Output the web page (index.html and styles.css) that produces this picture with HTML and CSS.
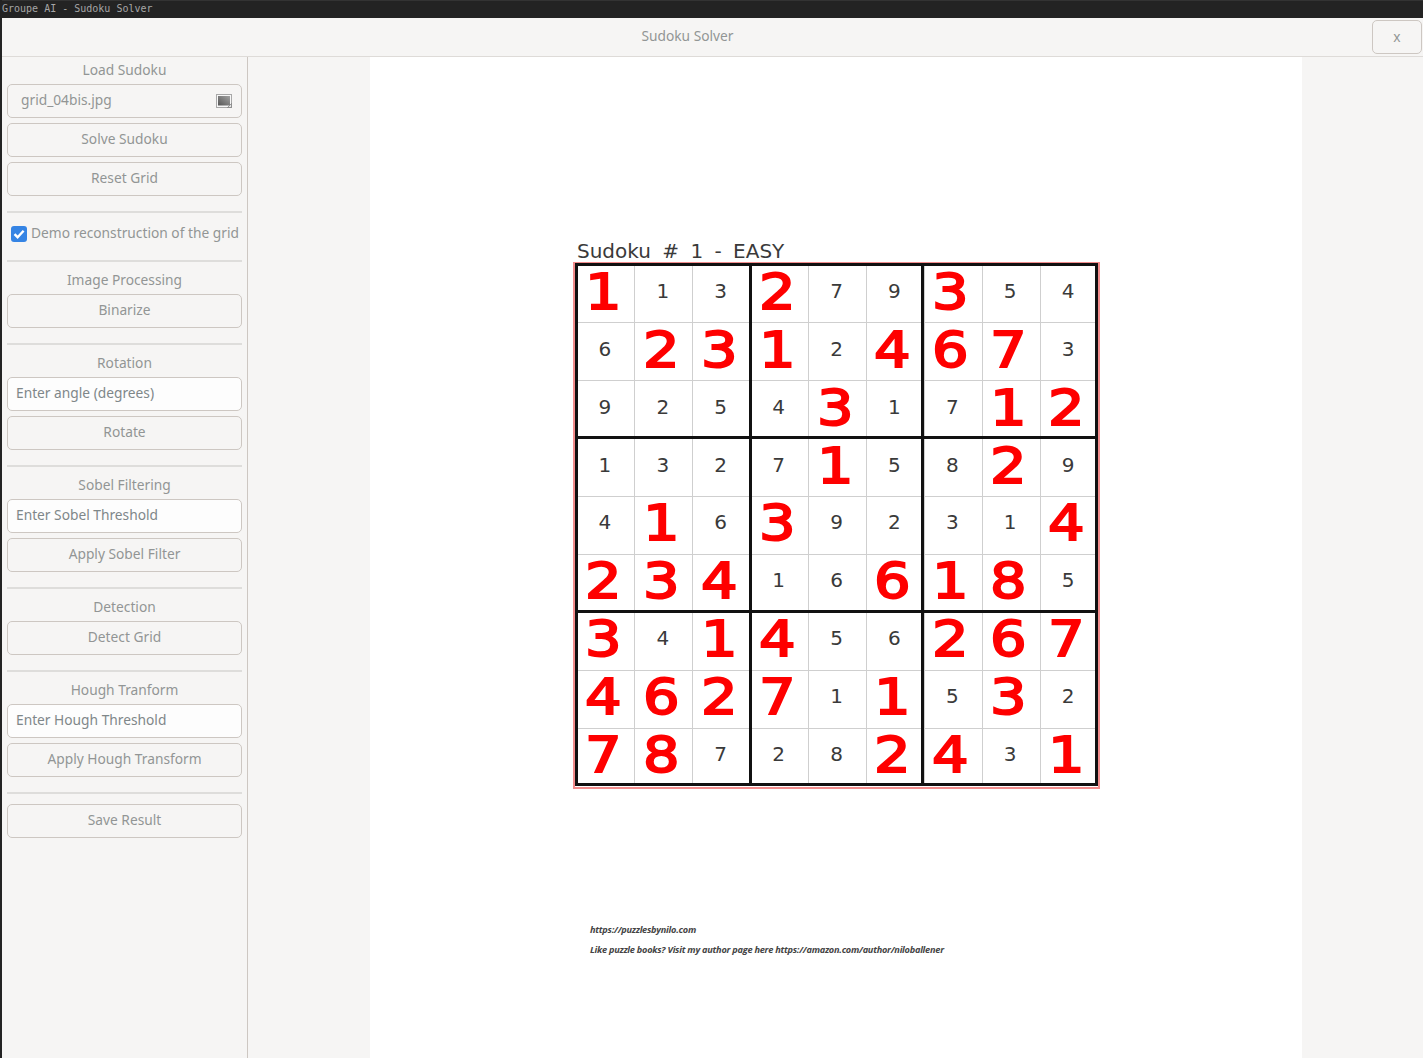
FILE: index.html
```html
<!DOCTYPE html>
<html lang="en">
<head>
    <meta charset="UTF-8">
    <title>Sudoku Solver</title>
    <link rel="stylesheet" href="styles.css">
</head>
<body>

    <!-- Window manager title strip -->
    <div class="wm-title">Groupe AI - Sudoku Solver</div>

    <div class="window">
        <header class="headerbar">
            <span class="headerbar-title">Sudoku Solver</span>
            <button class="close-btn">x</button>
        </header>

        <div class="content">
            <!-- Tool column on the left -->
            <aside class="sidebar">
                <div class="label">Load Sudoku</div>
                <div class="btn file-btn">
                    <span>grid_04bis.jpg</span>
                    <svg class="file-icon" width="16" height="14" viewBox="0 0 16 14">
                        <defs>
                            <linearGradient id="pic" x1="1" y1="0" x2="0" y2="1">
                                <stop offset="0" stop-color="#a2a2a2"/>
                                <stop offset="1" stop-color="#565656"/>
                            </linearGradient>
                        </defs>
                        <rect x="0.5" y="0.5" width="15" height="13" fill="#f6f6f6" stroke="#a8a8a8"/>
                        <rect x="2" y="2" width="12" height="9.5" fill="url(#pic)"/>
                        <path d="M11.5 13.5 L15.5 9.5 V13.5 Z" fill="#e4e4e4" stroke="#777" stroke-width="0.7"/>
                    </svg>
                </div>
                <div class="btn">Solve Sudoku</div>
                <div class="btn">Reset Grid</div>
                <div class="sep"></div>

                <label class="check-row">
                    <span class="check">
                        <svg width="16" height="16" viewBox="0 0 16 16">
                            <path d="M3.5 8.2 L6.6 11.2 L12.6 4.8" fill="none" stroke="#fff" stroke-width="2.4"/>
                        </svg>
                    </span>
                    Demo reconstruction of the grid
                </label>
                <div class="sep sep-check"></div>

                <div class="label">Image Processing</div>
                <div class="btn">Binarize</div>
                <div class="sep"></div>

                <div class="label">Rotation</div>
                <div class="entry">Enter angle (degrees)</div>
                <div class="btn">Rotate</div>
                <div class="sep"></div>

                <div class="label">Sobel Filtering</div>
                <div class="entry">Enter Sobel Threshold</div>
                <div class="btn">Apply Sobel Filter</div>
                <div class="sep"></div>

                <div class="label">Detection</div>
                <div class="btn">Detect Grid</div>
                <div class="sep"></div>

                <div class="label">Hough Tranform</div>
                <div class="entry">Enter Hough Threshold</div>
                <div class="btn">Apply Hough Transform</div>
                <div class="sep"></div>

                <div class="btn">Save Result</div>
            </aside>

            <!-- Loaded puzzle page -->
            <main class="viewer">
                <div class="page">
                    <div class="puzzle-title">Sudoku # 1 - EASY</div>
                    <div class="board-outline">
                        <div class="board">
                            <div class="cell big">1</div><div class="cell">1</div><div class="cell">3</div><div class="cell big">2</div><div class="cell">7</div><div class="cell">9</div><div class="cell big">3</div><div class="cell">5</div><div class="cell">4</div>
                            <div class="cell">6</div><div class="cell big">2</div><div class="cell big">3</div><div class="cell big">1</div><div class="cell">2</div><div class="cell big">4</div><div class="cell big">6</div><div class="cell big">7</div><div class="cell">3</div>
                            <div class="cell">9</div><div class="cell">2</div><div class="cell">5</div><div class="cell">4</div><div class="cell big">3</div><div class="cell">1</div><div class="cell">7</div><div class="cell big">1</div><div class="cell big">2</div>
                            <div class="cell">1</div><div class="cell">3</div><div class="cell">2</div><div class="cell">7</div><div class="cell big">1</div><div class="cell">5</div><div class="cell">8</div><div class="cell big">2</div><div class="cell">9</div>
                            <div class="cell">4</div><div class="cell big">1</div><div class="cell">6</div><div class="cell big">3</div><div class="cell">9</div><div class="cell">2</div><div class="cell">3</div><div class="cell">1</div><div class="cell big">4</div>
                            <div class="cell big">2</div><div class="cell big">3</div><div class="cell big">4</div><div class="cell">1</div><div class="cell">6</div><div class="cell big">6</div><div class="cell big">1</div><div class="cell big">8</div><div class="cell">5</div>
                            <div class="cell big">3</div><div class="cell">4</div><div class="cell big">1</div><div class="cell big">4</div><div class="cell">5</div><div class="cell">6</div><div class="cell big">2</div><div class="cell big">6</div><div class="cell big">7</div>
                            <div class="cell big">4</div><div class="cell big">6</div><div class="cell big">2</div><div class="cell big">7</div><div class="cell">1</div><div class="cell big">1</div><div class="cell">5</div><div class="cell big">3</div><div class="cell">2</div>
                            <div class="cell big">7</div><div class="cell big">8</div><div class="cell">7</div><div class="cell">2</div><div class="cell">8</div><div class="cell big">2</div><div class="cell big">4</div><div class="cell">3</div><div class="cell big">1</div>
                        </div>
                    </div>
                    <div class="puzzle-foot">
                        <p>https://puzzlesbynilo.com</p>
                        <p>Like puzzle books? Visit my author page here https://amazon.com/author/niloballener</p>
                    </div>
                </div>
            </main>
        </div>
    </div>

</body>
</html>
```
FILE: styles.css
```css
* {
    box-sizing: border-box;
}
html, body {
    height: 100%;
}
body {
    margin: 0;
    display: flex;
    flex-direction: column;
    overflow: hidden;
    background: #f6f5f4;
    font-family: "Noto Sans", sans-serif;
    font-size: 13.75px;
    color: #929595;
    border-left: 2px solid #232323;
}

/* Window strip */
.wm-title {
    height: 18px;
    margin-left: -2px;
    padding: 1px 2px 0;
    background: #232323;
    border-top: 1px solid #333;
    font-family: "DejaVu Sans Mono", monospace;
    font-size: 10px;
    line-height: 13px;
    color: #a6a6a6;
}
.window {
    flex: 1;
    display: flex;
    flex-direction: column;
    min-height: 0;
}

/* Header bar */
.headerbar {
    position: relative;
    height: 39px;
    flex: none;
    display: flex;
    justify-content: flex-end;
    padding: 2px 1px 0 0;
    border-bottom: 1px solid #dedbd8;
}
.headerbar-title {
    position: absolute;
    top: 9px;
    left: 0;
    width: 1371px;
    text-align: center;
    line-height: 17px;
}
.close-btn {
    width: 50px;
    height: 34px;
    background: #f6f5f4;
    border: 1px solid #cdc7c2;
    border-radius: 5px;
    font: inherit;
    color: #929595;
    padding: 0 0 2px;
}

.content {
    flex: 1;
    display: flex;
    min-height: 0;
}

/* Sidebar */
.sidebar {
    width: 246px;
    flex: none;
    padding: 5px 5px 0;
    border-right: 1px solid #cdc7c2;
}
.label {
    height: 17px;
    line-height: 15px;
    margin-bottom: 5px;
    text-align: center;
}
.btn, .entry {
    height: 34px;
    line-height: 30px;
    border: 1px solid #cdc7c2;
    border-radius: 5px;
    margin-bottom: 5px;
}
.btn {
    text-align: center;
}
.file-btn {
    display: flex;
    justify-content: space-between;
    align-items: center;
    padding: 0 9px 0 13px;
}
.file-btn span {
    margin-top: -2px;
}
.file-icon {
    flex: none;
}
.entry {
    padding-left: 8px;
    background: #fdfdfd;
    color: #7f8789;
}
.sep {
    height: 2px;
    margin: 15px 0 10px;
    background: #dedddb;
}
.sep-check {
    margin-top: 0;
}
.check-row {
    height: 47px;
    margin-top: -10px;
    padding: 0 0 9px 4px;
    display: flex;
    align-items: center;
    gap: 4px;
    white-space: nowrap;
}
.check {
    width: 16px;
    height: 16px;
    flex: none;
    display: block;
    margin-top: 4px;
    background: #3584e4;
    border-radius: 3px;
}
.check svg {
    display: block;
}

/* Image area */
.viewer {
    flex: 1;
    padding: 0 121px 0 122px;
    min-width: 0;
}
.page {
    height: 100%;
    background: #fff;
    padding: 183px 0 0 203px;
}
.puzzle-title {
    height: 22px;
    padding-left: 4px;
    font-family: "DejaVu Sans", sans-serif;
    font-size: 20px;
    line-height: 22px;
    word-spacing: 5px;
    color: #3a3a3a;
}
.board-outline {
    width: 527px;
    height: 527px;
    padding: 1px;
    border: 2px solid #f28c8c;
}
.board {
    position: relative;
    display: grid;
    grid-template-columns: repeat(9, minmax(0, 1fr));
    grid-template-rows: repeat(9, minmax(0, 1fr));
    width: 521px;
    height: 520px;
    background:
        repeating-linear-gradient(90deg, transparent 0 57px, #cfcfcf 57px 58px) 1px 0,
        repeating-linear-gradient(180deg, transparent 0 57px, #cfcfcf 57px 58px);
}
/* frame and box lines sit over the cells so the cells stay equal */
.board::after {
    content: "";
    position: absolute;
    inset: -2px -1px -1px;
    border: 3px solid #111;
    background:
        linear-gradient(#111, #111) 171px 0 / 3px 100% no-repeat,
        linear-gradient(#111, #111) 343px 0 / 3px 100% no-repeat,
        linear-gradient(#111, #111) 0 170px / 100% 3px no-repeat,
        linear-gradient(#111, #111) 0 344px / 100% 3px no-repeat;
}
.cell {
    display: flex;
    align-items: center;
    justify-content: center;
    padding: 0 0 5px;
    font-family: "DejaVu Sans", sans-serif;
    font-size: 20px;
    line-height: 1;
    color: #3a3a3a;
}
.big {
    padding: 0 3px 3px 0;
    font-size: 50px;
    color: #fe0000;
    -webkit-text-stroke: 2px #fe0000;
    transform: scaleX(1.15);
}
.puzzle-foot {
    margin: 134px 0 0 17px;
    font-family: "Open Sans", sans-serif;
    font-size: 9.2px;
    font-style: italic;
    font-weight: bold;
    letter-spacing: -0.25px;
    color: #444;
}
.puzzle-foot p {
    margin: 0 0 6px;
    line-height: 14px;
    white-space: nowrap;
}
```
